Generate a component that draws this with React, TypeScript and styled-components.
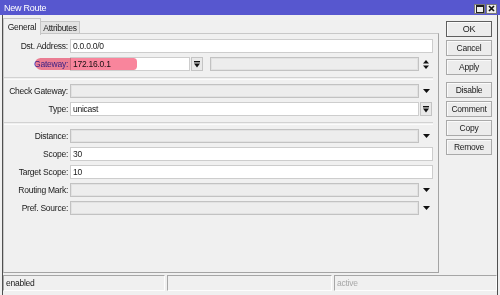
import styled, { createGlobalStyle } from 'styled-components';

const GlobalStyle = createGlobalStyle`
  html, body {
    margin: 0;
    padding: 0;
    background: #f0f0f0;
  }
`;

const Window = styled.div`
  width: 500px;
  height: 295px;
  display: flex;
  flex-direction: column;
  overflow: hidden;
  background: #f0f0f0;
  font-family: 'Liberation Sans', Arial, sans-serif;
  font-size: 8.5px;
  letter-spacing: -0.25px;
  color: #1a1a1a;
`;

const TitleBar = styled.div`
  height: 15px;
  flex: none;
  display: flex;
  align-items: center;
  justify-content: space-between;
  padding: 0 3px 0 4px;
  background: #5757cf;
  color: #fff;
  font-size: 9px;
`;

const TitleButtons = styled.div`
  display: flex;
  gap: 1px;
  margin-top: 2px;
`;

const TitleButton = styled.div`
  width: 11px;
  height: 10px;
  box-sizing: border-box;
  display: flex;
  align-items: center;
  justify-content: center;
  background: #ececec;
  border: 1px solid #7a7a7a;
`;

const MaxGlyph = styled.div`
  width: 6px;
  height: 5px;
  border: 1px solid #222;
  border-top-width: 2px;
`;

const Frame = styled.div`
  flex: 1;
  display: flex;
  flex-direction: column;
  margin: 0 2px;
  border-left: 1px solid #505050;
  border-right: 1px solid #505050;
  min-height: 0;
`;

const Body = styled.div`
  flex: 1;
  display: flex;
  min-height: 0;
`;

const LeftPane = styled.div`
  width: 436px;
  display: flex;
  flex-direction: column;
  padding-top: 3px;
`;

const TabStrip = styled.div`
  display: flex;
  align-items: flex-end;
  height: 16px;
  margin-bottom: -1px;
  position: relative;
  z-index: 1;
`;

const Tab = styled.div<{ $active?: boolean }>`
  box-sizing: border-box;
  height: ${({ $active }) => ($active ? '17px' : '13px')};
  width: ${({ $active }) => ($active ? '38px' : '39px')};
  display: flex;
  align-items: ${({ $active }) => ($active ? 'flex-start' : 'center')};
  justify-content: center;
  padding-top: ${({ $active }) => ($active ? '3px' : '0')};
  background: ${({ $active }) => ($active ? '#f0f0f0' : '#e3e3e3')};
  border: 1px solid #c6c6c6;
  border-bottom: ${({ $active }) => ($active ? 'none' : '1px solid #c6c6c6')};
  border-left: ${({ $active }) => ($active ? '1px solid #c6c6c6' : 'none')};
  margin-bottom: ${({ $active }) => ($active ? '-1px' : '0')};
`;

const Panel = styled.div`
  flex: 1;
  box-sizing: border-box;
  display: flex;
  flex-direction: column;
  gap: 4px;
  padding: 5px 5px 0 0;
  border: 1px solid #c8c8c8;
  border-right-color: #a4a4a4;
  border-bottom-color: #a4a4a4;
`;

const Row = styled.div`
  position: relative;
  display: grid;
  grid-template-columns: 64px 1fr;
  column-gap: 2px;
  height: 14px;
  line-height: 14px;
`;

const Label = styled.div<{ $color?: string }>`
  text-align: right;
  white-space: nowrap;
  color: ${({ $color }) => $color || '#1a1a1a'};
  position: relative;
  z-index: 0;
`;

const Fields = styled.div`
  display: flex;
  align-items: stretch;
  min-width: 0;
`;

const Input = styled.div<{ $grey?: boolean; $width?: number }>`
  box-sizing: border-box;
  height: 14px;
  line-height: 12px;
  padding-left: 2px;
  flex: ${({ $width }) => ($width ? 'none' : '1')};
  width: ${({ $width }) => ($width ? `${$width}px` : 'auto')};
  background: ${({ $grey }) => ($grey ? '#ededed' : '#ffffff')};
  border: 1px solid ${({ $grey }) => ($grey ? '#c2c2c2' : '#cdcdcd')};
  box-shadow: ${({ $grey }) => ($grey ? 'inset 0 0 0 1px #e2e2e2' : 'none')};
  white-space: nowrap;
  overflow: hidden;
`;

const Trailing = styled.div`
  width: 14px;
  flex: none;
  display: flex;
  align-items: center;
  justify-content: center;
`;

const IconButton = styled.div<{ $gapLeft?: number }>`
  box-sizing: border-box;
  width: 12px;
  height: 14px;
  flex: none;
  margin-left: ${({ $gapLeft }) => $gapLeft ?? 1}px;
  display: flex;
  align-items: center;
  justify-content: center;
  background: #e9e9e9;
  border: 1px solid #c4c4c4;
`;

const Spacer = styled.div<{ $w: number }>`
  width: ${({ $w }) => $w}px;
  flex: none;
`;

const Separator = styled.div`
  height: 1px;
  margin: 2px 0 0 0;
  border-top: 1px solid #d2d2d2;
  border-bottom: 1px solid #fbfbfb;
`;

const Highlight = styled.div`
  position: absolute;
  left: 31px;
  top: 1px;
  width: 102px;
  height: 12px;
  border-radius: 6px 4px 4px 7px;
  background: rgba(246, 58, 96, 0.62);
  mix-blend-mode: multiply;
  pointer-events: none;
  z-index: 2;
`;

const ButtonColumn = styled.div`
  width: 46px;
  margin-left: 7px;
  padding-top: 6px;
  display: flex;
  flex-direction: column;
  gap: 3px;
`;

const Button = styled.div<{ $default?: boolean; $gapTop?: number }>`
  box-sizing: border-box;
  height: 16px;
  display: flex;
  align-items: center;
  justify-content: center;
  margin-top: ${({ $gapTop }) => $gapTop ?? 0}px;
  background: #ececec;
  border: 1px solid ${({ $default }) => ($default ? '#5e5e5e' : '#a9a9a9')};
  box-shadow: inset 1px 1px 0 #fafafa;
  font-size: ${({ $default }) => ($default ? '9px' : '8.5px')};
`;

const StatusBar = styled.div`
  height: 16px;
  flex: none;
  margin: 2px 0 4px;
  display: grid;
  grid-template-columns: 162px 165px 1fr;
  gap: 2px;
`;

const StatusCell = styled.div<{ $muted?: boolean }>`
  box-sizing: border-box;
  border-top: 1px solid #a6a6a6;
  border-left: 1px solid #a6a6a6;
  border-bottom: 1px solid #fdfdfd;
  border-right: 1px solid #fdfdfd;
  padding-left: 2px;
  line-height: 14px;
  color: ${({ $muted }) => ($muted ? '#a8a8a8' : '#1a1a1a')};
`;

const DropArrow = () => (
  <svg width="7" height="4" viewBox="0 0 7 4">
    <polygon points="0,0 7,0 3.5,4" fill="#111" />
  </svg>
);

const AddArrow = () => (
  <svg width="6" height="7" viewBox="0 0 6 7">
    <rect x="0" y="0" width="6" height="1.4" fill="#111" />
    <polygon points="0,2.6 6,2.6 3,6.6" fill="#111" />
  </svg>
);

const UpDown = () => (
  <svg width="6" height="9" viewBox="0 0 6 9">
    <polygon points="0,3.6 6,3.6 3,0" fill="#111" />
    <polygon points="0,5.4 6,5.4 3,9" fill="#111" />
  </svg>
);

const CloseGlyph = () => (
  <svg width="7" height="7" viewBox="0 0 7 7">
    <path d="M1 1 L6 6 M6 1 L1 6" stroke="#111" strokeWidth="1.7" />
  </svg>
);

type FieldRow = {
  label: string;
  value?: string;
  grey?: boolean;
  trailing?: 'drop' | 'add' | 'none';
};

function SimpleRow({ label, value, grey, trailing = 'none' }: FieldRow) {
  return (
    <Row>
      <Label>{label}</Label>
      <Fields>
        <Input $grey={grey}>{value}</Input>
        {trailing === 'drop' && (
          <Trailing>
            <DropArrow />
          </Trailing>
        )}
        {trailing === 'add' && (
          <>
            <IconButton>
              <AddArrow />
            </IconButton>
            <Spacer $w={1} />
          </>
        )}
      </Fields>
    </Row>
  );
}

const buttons = ['OK', 'Cancel', 'Apply', 'Disable', 'Comment', 'Copy', 'Remove'];

export default function App() {
  return (
    <>
      <GlobalStyle />
      <Window>
        <TitleBar>
          <span>New Route</span>
          <TitleButtons>
            <TitleButton>
              <MaxGlyph />
            </TitleButton>
            <TitleButton>
              <CloseGlyph />
            </TitleButton>
          </TitleButtons>
        </TitleBar>
        <Frame>
          <Body>
            <LeftPane>
              <TabStrip>
                <Tab $active>General</Tab>
                <Tab>Attributes</Tab>
              </TabStrip>
              <Panel>
                <SimpleRow label="Dst. Address:" value="0.0.0.0/0" />
                <Row>
                  <Label $color="#3b3bd6">Gateway:</Label>
                  <Fields>
                    <Input $width={120}>172.16.0.1</Input>
                    <IconButton>
                      <AddArrow />
                    </IconButton>
                    <Spacer $w={7} />
                    <Input $grey />
                    <Trailing>
                      <UpDown />
                    </Trailing>
                  </Fields>
                  <Highlight />
                </Row>
                <Separator />
                <SimpleRow label="Check Gateway:" grey trailing="drop" />
                <SimpleRow label="Type:" value="unicast" trailing="add" />
                <Separator />
                <SimpleRow label="Distance:" grey trailing="drop" />
                <SimpleRow label="Scope:" value="30" />
                <SimpleRow label="Target Scope:" value="10" />
                <SimpleRow label="Routing Mark:" grey trailing="drop" />
                <SimpleRow label="Pref. Source:" grey trailing="drop" />
              </Panel>
            </LeftPane>
            <ButtonColumn>
              {buttons.map((b) => (
                <Button key={b} $default={b === 'OK'} $gapTop={b === 'Disable' ? 4 : 0}>
                  {b}
                </Button>
              ))}
            </ButtonColumn>
          </Body>
          <StatusBar>
            <StatusCell>enabled</StatusCell>
            <StatusCell />
            <StatusCell $muted>active</StatusCell>
          </StatusBar>
        </Frame>
      </Window>
    </>
  );
}
